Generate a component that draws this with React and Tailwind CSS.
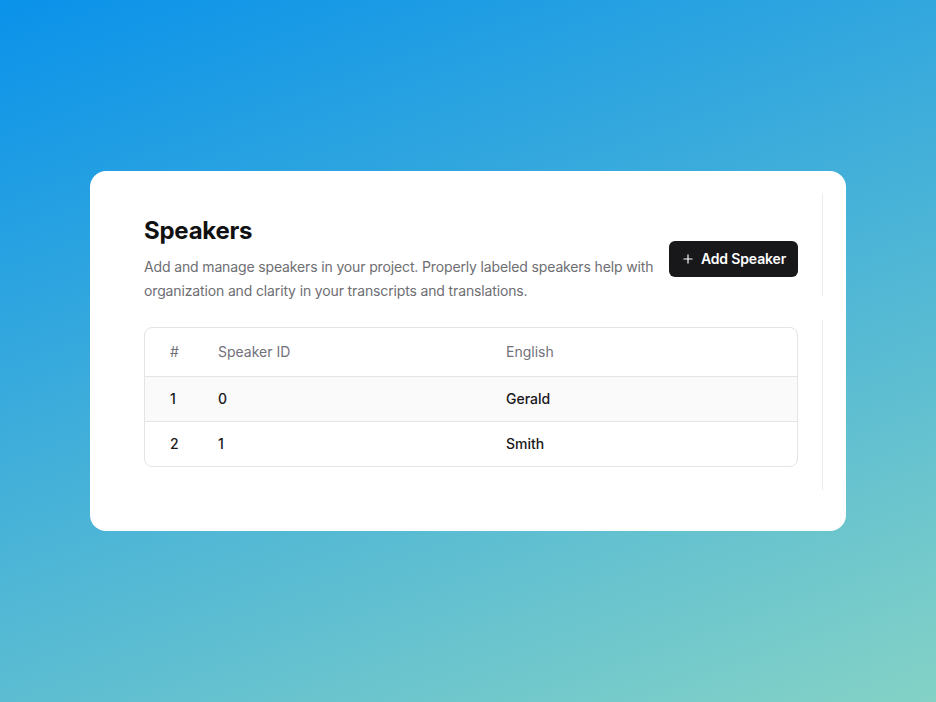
import React from 'react';
import { Plus } from 'lucide-react';

const speakers = [
    { id: '0', name: 'Gerald' },
    { id: '1', name: 'Smith' },
];

const App = () => {
    return (
        <div
            className="min-h-screen w-full flex items-center justify-center bg-[linear-gradient(160deg,#0a92ea,#84d2c6)]"
            style={{ fontFamily: 'Inter, "Liberation Sans", sans-serif' }}
        >
            <div className="w-[756px] h-[360px] bg-white rounded-2xl overflow-hidden flex items-start gap-6 pl-[54px]">
                <div className="w-[654px] shrink-0 pt-[44px]">
                    <div className="flex items-center justify-between">
                        <div>
                            <h1 className="text-2xl leading-8 font-bold text-[#111111] tracking-[-0.01em]">Speakers</h1>
                            <p className="mt-2 text-sm leading-6 text-[#6e6e73] w-[516px] tracking-[-0.01em]">
                                Add and manage speakers in your project. Properly labeled speakers help with organization and clarity in your transcripts and translations.
                            </p>
                        </div>
                        <button className="h-9 w-[129px] rounded-md bg-[#18181b] text-white text-sm font-semibold tracking-[-0.01em] flex items-center justify-center gap-[6px] shrink-0">
                            <Plus size={14} strokeWidth={2} />
                            Add Speaker
                        </button>
                    </div>

                    <div className="mt-6 border border-[#e4e4e7] rounded-lg overflow-hidden text-sm">
                        <div className="grid grid-cols-[73px_288px_1fr] h-[49px] items-center border-b border-[#e4e4e7] text-[#71717a]">
                            <div className="pl-[25px]">#</div>
                            <div>Speaker ID</div>
                            <div>English</div>
                        </div>
                        {speakers.map((s, i) => (
                            <div
                                key={s.id}
                                className={
                                    i === 0
                                        ? 'grid grid-cols-[73px_288px_1fr] h-[45px] items-center border-b border-[#e4e4e7] bg-[#fafafa] text-[#18181b] font-medium'
                                        : 'grid grid-cols-[73px_288px_1fr] h-[44px] items-center text-[#18181b] font-medium'
                                }
                            >
                                <div className="pl-[25px]">{i + 1}</div>
                                <div>{s.id}</div>
                                <div>{s.name}</div>
                            </div>
                        ))}
                    </div>
                </div>

                <div className="w-[200px] shrink-0 pt-[22px] flex flex-col gap-6">
                    <div className="h-[103px] border-l border-[#ebebeb]"></div>
                    <div className="h-[170px] border-l border-[#ebebeb]"></div>
                </div>
            </div>
        </div>
    );
};

export default App;
